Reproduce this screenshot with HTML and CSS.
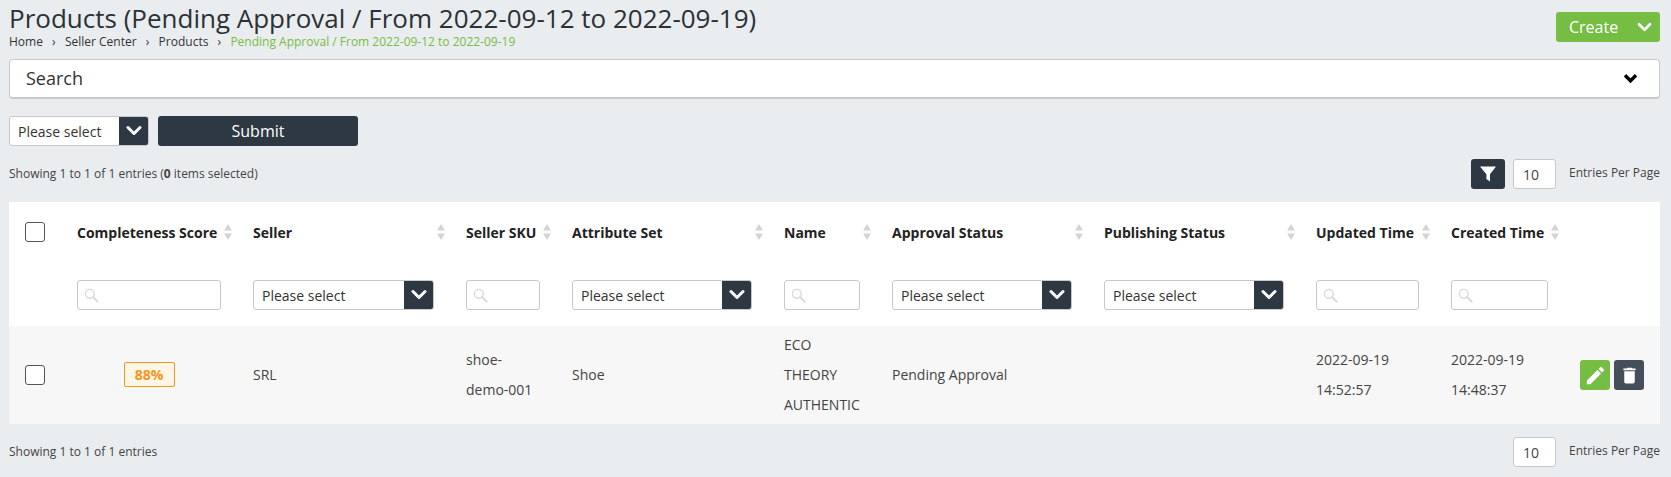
FILE: index.html
```html
<!DOCTYPE html>
<html lang="en">
<head>
<meta charset="utf-8">
<title>Products</title>
<link rel="stylesheet" href="styles.css">
</head>
<body>
<svg class="defs" width="0" height="0" aria-hidden="true">
  <symbol id="chev" viewBox="0 0 16 12"><path d="M2 2.5 8 8.5 14 2.5" fill="none" stroke="currentColor" stroke-width="3" stroke-linecap="round" stroke-linejoin="round"/></symbol>
  <symbol id="mag" viewBox="0 0 16 16"><circle cx="6.2" cy="6.2" r="4.7" fill="none" stroke="currentColor" stroke-width="1.4"/><path d="M9.8 9.8 14.6 14.6" stroke="currentColor" stroke-width="2" stroke-linecap="round"/></symbol>
  <symbol id="sort" viewBox="0 0 8 16"><path d="M4 0 8 6.5H0Z M4 16 8 9.5H0Z" fill="currentColor"/></symbol>
</svg>
<header class="page-head">
  <div>
    <h1 class="title">Products (Pending Approval / From 2022-09-12 to 2022-09-19)</h1>
    <nav class="crumbs"><span>Home</span><i>›</i><span>Seller Center</span><i>›</i><span>Products</span><i>›</i><span class="current">Pending Approval / From 2022-09-12 to 2022-09-19</span></nav>
  </div>
  <button class="create"><span>Create</span><svg class="create-chev"><use href="#chev"/></svg></button>
</header>

<section class="search-panel">
  <span class="search-label">Search</span>
  <svg class="search-chev" viewBox="0 0 16 12"><path d="M2 2.5 8 8.5 14 2.5" fill="none" stroke="currentColor" stroke-width="3.6"/></svg>
</section>

<div class="bulk">
  <div class="select select-bulk"><span class="select-text">Please select</span><span class="select-arrow"><svg><use href="#chev"/></svg></span></div>
  <button class="submit">Submit</button>
</div>

<div class="bar bar-top">
  <p class="info">Showing 1 to 1 of 1 entries (<b>0</b> items selected)</p>
  <div class="pager">
    <button class="filter-btn"><svg viewBox="0 0 18 18"><path d="M1 1.5H17L11 9.2V16.5L7.4 14V9.2Z" fill="#fff"/></svg></button>
    <input class="per-page" value="10">
    <span class="per-label">Entries Per Page</span>
  </div>
</div>

<table class="grid">
  <colgroup>
    <col class="c-52"><col class="c-176"><col class="c-213"><col class="c-106"><col class="c-212"><col class="c-108"><col class="c-212"><col class="c-212"><col class="c-135"><col class="c-129"><col class="c-96">
  </colgroup>
  <thead>
    <tr class="head-row">
      <th><span class="check"></span></th>
      <th><div class="th"><span>Completeness Score</span><svg class="sort"><use href="#sort"/></svg></div></th>
      <th><div class="th"><span>Seller</span><svg class="sort"><use href="#sort"/></svg></div></th>
      <th><div class="th"><span>Seller SKU</span><svg class="sort"><use href="#sort"/></svg></div></th>
      <th><div class="th"><span>Attribute Set</span><svg class="sort"><use href="#sort"/></svg></div></th>
      <th><div class="th"><span>Name</span><svg class="sort"><use href="#sort"/></svg></div></th>
      <th><div class="th"><span>Approval Status</span><svg class="sort"><use href="#sort"/></svg></div></th>
      <th><div class="th"><span>Publishing Status</span><svg class="sort"><use href="#sort"/></svg></div></th>
      <th><div class="th"><span>Updated Time</span><svg class="sort"><use href="#sort"/></svg></div></th>
      <th><div class="th"><span>Created Time</span><svg class="sort"><use href="#sort"/></svg></div></th>
      <th></th>
    </tr>
    <tr class="filter-row">
      <td></td>
      <td><label class="find"><svg><use href="#mag"/></svg><input></label></td>
      <td><div class="select"><span class="select-text">Please select</span><span class="select-arrow"><svg><use href="#chev"/></svg></span></div></td>
      <td><label class="find"><svg><use href="#mag"/></svg><input></label></td>
      <td><div class="select"><span class="select-text">Please select</span><span class="select-arrow"><svg><use href="#chev"/></svg></span></div></td>
      <td><label class="find"><svg><use href="#mag"/></svg><input></label></td>
      <td><div class="select"><span class="select-text">Please select</span><span class="select-arrow"><svg><use href="#chev"/></svg></span></div></td>
      <td><div class="select"><span class="select-text">Please select</span><span class="select-arrow"><svg><use href="#chev"/></svg></span></div></td>
      <td><label class="find"><svg><use href="#mag"/></svg><input></label></td>
      <td><label class="find"><svg><use href="#mag"/></svg><input></label></td>
      <td></td>
    </tr>
  </thead>
  <tbody>
    <tr class="data-row">
      <td><span class="check"></span></td>
      <td class="center"><span class="score">88%</span></td>
      <td>SRL</td>
      <td>shoe-demo-001</td>
      <td>Shoe</td>
      <td>ECO THEORY AUTHENTIC</td>
      <td>Pending Approval</td>
      <td></td>
      <td>2022-09-19 14:52:57</td>
      <td>2022-09-19 14:48:37</td>
      <td class="actions-cell"><div class="actions">
        <button class="act act-edit"><svg viewBox="0 0 24 24"><path d="M3 17.25V21h3.75L17.81 9.94l-3.75-3.75L3 17.25zM20.71 7.04a1 1 0 0 0 0-1.41l-2.34-2.34a1 1 0 0 0-1.41 0l-1.83 1.83 3.75 3.75 1.83-1.83z" fill="#fff"/></svg></button>
        <button class="act act-del"><svg viewBox="0 0 24 24"><path d="M6 19c0 1.1.9 2 2 2h8c1.1 0 2-.9 2-2V7H6v12zM19 4h-3.5l-1-1h-5l-1 1H5v2h14V4z" fill="#fff"/></svg></button>
      </div></td>
    </tr>
  </tbody>
</table>

<div class="bar bar-bottom">
  <p class="info">Showing 1 to 1 of 1 entries</p>
  <div class="pager">
    <input class="per-page" value="10">
    <span class="per-label">Entries Per Page</span>
  </div>
</div>
</body>
</html>
```

FILE: styles.css
```css
* { box-sizing: border-box; }
html, body { margin: 0; padding: 0; }
body {
  width: 1671px;
  height: 477px;
  overflow: hidden;
  padding: 0 11px 0 9px;
  background: #e9edf0;
  color: #444;
  font-family: "Open Sans", "Liberation Sans", sans-serif;
  font-size: 14px;
}
.defs { position: absolute; }
button { font-family: inherit; border: 0; padding: 0; cursor: pointer; }

.page-head { display: flex; justify-content: space-between; align-items: flex-start; height: 59px; }
.title { margin: 0; font-size: 26px; line-height: 36px; font-weight: 400; color: #2c3136; white-space: nowrap; }
.crumbs { display: flex; font-size: 12px; line-height: 14px; margin-top: -1px; color: #333; }
.crumbs i { font-style: normal; margin: 0 9.2px; }
.crumbs .current { color: #76bd43; }

.create {
  display: flex; align-items: center; justify-content: space-between;
  width: 104px; height: 30px; margin-top: 12px; padding: 0 8px 0 13px;
  background: #76bd43; color: #fff; border-radius: 3px; font-size: 16px;
}
.create-chev { width: 15px; height: 11px; }

.search-panel {
  display: flex; align-items: center; justify-content: space-between;
  height: 40px; padding: 0 21px 0 16px;
  background: #fff; border: 1px solid #c9c9c9; border-bottom-width: 2px; border-radius: 4px;
  font-size: 18px; color: #333;
}
.search-label { margin-bottom: 2px; }
.search-chev { width: 15px; height: 11px; color: #000; }

.bulk { display: flex; gap: 9px; margin-top: 17px; }
.select {
  display: flex; height: 30px; width: 100%;
  background: #fff; border: 1px solid #c8c8c8; border-radius: 3px; overflow: hidden;
}
.select-bulk { width: 140px; }
.select-text { flex: 1; padding-left: 8px; line-height: 30px; color: #333; white-space: nowrap; }
.select-arrow {
  display: flex; align-items: center; justify-content: center;
  width: 30px; margin: -1px -1px -1px 0; background: #2d3842; color: #fff;
}
.select-arrow svg { width: 16px; height: 12px; }
.submit { width: 200px; height: 30px; background: #2d3842; color: #fff; border-radius: 3px; font-size: 16px; }

.bar { display: flex; justify-content: space-between; align-items: center; }
.bar-top { margin-top: 13px; height: 30px; }
.bar-bottom { margin-top: 13px; height: 30px; }
.info { margin: 0; font-size: 12px; line-height: 16px; color: #444; }
.bar-top .info { margin-bottom: 1px; }
.pager { display: flex; align-items: center; }
.filter-btn {
  display: flex; align-items: center; justify-content: center;
  width: 34px; height: 30px; margin-right: 8px; background: #2d3842; border-radius: 3px;
}
.filter-btn svg { width: 18px; height: 18px; }
.per-page {
  width: 43px; height: 30px; padding: 0 9px; font: 14px "Open Sans", sans-serif; color: #444;
  background: #fff; border: 1px solid #c8c8c8; border-radius: 3px; outline: 0;
}
.per-label { margin-left: 13px; font-size: 12px; line-height: 16px; color: #444; margin-bottom: 2px; }

.grid { width: 1651px; table-layout: fixed; border-collapse: collapse; margin-top: 13px; }
.c-52 { width: 52px; } .c-176 { width: 176px; } .c-213 { width: 213px; } .c-106 { width: 106px; }
.c-212 { width: 212px; } .c-108 { width: 108px; } .c-135 { width: 135px; } .c-129 { width: 129px; } .c-96 { width: 96px; }
.grid th, .grid td { padding: 0 16px; text-align: left; }
.head-row { background: #fff; height: 62px; }
.head-row th { font-size: 14px; font-weight: 700; color: #222; padding-bottom: 2px; }
.th { display: flex; justify-content: space-between; align-items: center; margin-right: -11px; white-space: nowrap; }
.sort { flex: none; width: 8px; height: 16px; color: #d4d4d4; }
.filter-row { background: #fff; height: 62px; }
.find {
  display: flex; align-items: center; height: 30px; padding-left: 6px;
  background: #fff; border: 1px solid #c8c8c8; border-radius: 3px;
}
.find svg { flex: none; width: 15px; height: 15px; color: #d8d8d8; }
.find input { flex: 1; min-width: 0; width: 100%; height: 26px; border: 0; outline: 0; background: transparent; }

.data-row { background: #f7f7f7; height: 98px; line-height: 30px; color: #444; }
.data-row td { padding-top: 4px; padding-bottom: 4px; }
.grid .center { text-align: center; }
.check {
  display: block; width: 20px; height: 20px;
  background: #fff; border: 1px solid #555; border-radius: 3px;
}
.score {
  display: inline-block; width: 51px; height: 25px; line-height: 23px; text-align: center;
  background: #fff7e6; border: 1px solid #f7941d; border-radius: 2px;
  color: #f7941d; font-weight: 700;
}
.grid .actions-cell { padding: 0; }
.actions { display: flex; gap: 4px; padding-left: 16px; }
.act { display: flex; align-items: center; justify-content: center; width: 30px; height: 30px; border-radius: 3px; }
.act-edit svg { width: 23px; height: 23px; }
.act-del svg { width: 21px; height: 21px; }
.act-edit { background: #76bd43; }
.act-del { background: #444f5a; }
```
